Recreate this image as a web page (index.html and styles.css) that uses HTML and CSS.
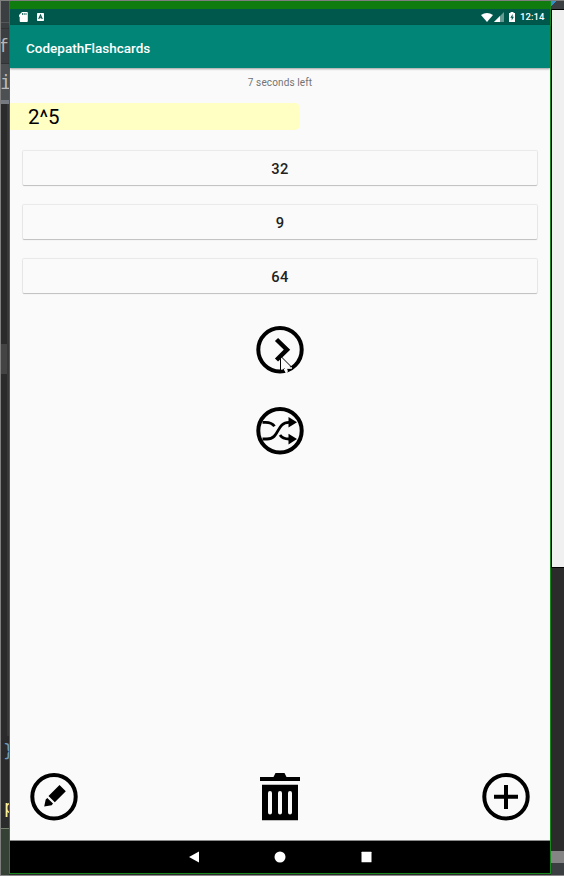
FILE: index.html
```
<!DOCTYPE html>
<html lang="en">
<head>
<meta charset="utf-8">
<title>CodepathFlashcards</title>
<link rel="stylesheet" href="styles.css">
</head>
<body>
<div class="desktop">
  <aside class="editor">
    <div class="seg toolbar"></div>
    <div class="seg toolbar-gap"></div>
    <div class="seg tab"><span class="tab-text">f'</span></div>
    <div class="seg tab-active"><span class="active-text">i</span></div>
    <div class="seg tab-line"></div>
    <div class="seg code code-top"></div>
    <div class="seg code-mark"></div>
    <div class="seg code code-mid"></div>
    <div class="seg code code-brace"><span>}</span></div>
    <div class="seg code code-word"><span>p</span></div>
    <div class="seg editor-foot"></div>
  </aside>
  <main class="device">
    <div class="frame-top"></div>
    <div class="status">
      <svg class="sd" width="9" height="10" viewBox="0 0 9 10"><path fill="#fff" d="M3 0h5q.8 0 .8.8V9q0 1-.8 1H1.500Q.7 10 .7 9V5L0 4.500V3z"/><path stroke="#00574b" stroke-width=".8" d="M3.500 1v2M5.200 1v2M7 1v2"/></svg>
      <svg class="abox" width="7" height="8" viewBox="0 0 7 8"><rect width="7" height="8" rx=".7" fill="#fff"/><path d="M1.700 6 3.500 2 5.300 6M2.500 4.800h2" fill="none" stroke="#00574b" stroke-width="1.100"/></svg>
      <span class="grow"></span>
      <svg class="wifi" width="12" height="9" viewBox="0 0 12 9"><path fill="#fff" d="M0 2Q6-2 12 2L6 9z"/></svg>
      <svg class="signal" width="10" height="10" viewBox="0 0 10 10"><path fill="#fff" fill-opacity=".4" d="M10 0v10H0z"/><path fill="#fff" d="M6 4v6H0z"/></svg>
      <svg class="battery" width="6" height="10" viewBox="0 0 6 10"><path fill="#fff" d="M1.500 0h3v1H6v9H0V1h1.500z"/><path fill="#00574b" d="M3.700 2 1.300 5.800h1.400V8.500L4.900 4.700H3.500z"/></svg>
      <span class="clock">12:14</span>
    </div>
    <header class="appbar">CodepathFlashcards</header>
    <section class="content">
      <p class="timer">7 seconds left</p>
      <div class="question">2^5</div>
      <div class="answers">
        <button>32</button>
        <button>9</button>
        <button>64</button>
      </div>
      <div class="controls">
        <svg width="48" height="48" viewBox="0 0 48 48"><circle cx="24" cy="23.700" r="21.700" fill="none" stroke="#000" stroke-width="4"/><path d="M20.500 13.500 31 23.700 20.500 34" fill="none" stroke="#000" stroke-width="4.500"/><path d="M25 31.500v12h3l2 3 2-1-1-3h4z" fill="#fafafa"/><path d="M25 30.500 35.500 41M24.500 31v15l4-3.500" fill="none" stroke="#000" stroke-width="1"/><path d="M28.500 43l2 4M30.500 42h5.500" fill="none" stroke="#fafafa" stroke-width="1.500"/></svg>
        <svg width="48" height="48" viewBox="0 0 48 48"><circle cx="24" cy="23.700" r="21.700" fill="none" stroke="#000" stroke-width="4"/><path d="M6.500 15.300h3c4 0 7 1 9 4M6.500 32h4.500c13 0 9-16.700 22-16.700M24 28c2 3 5 4 9 4" fill="none" stroke="#000" stroke-width="2.800"/><path d="M32.500 10 41 15.300 32.500 20.500zM32.500 26.800 41 32 32.500 37.500z"/></svg>
      </div>
      <div class="actions">
        <svg width="48" height="48" viewBox="0 0 48 48"><circle cx="24" cy="23.700" r="21.700" fill="none" stroke="#000" stroke-width="4"/><path d="M29.500 12 35.800 18.300 24.800 29.200 18.500 23zM17.300 25 23 30.500 21.700 32.200 14.200 33.400 15.700 26.500z"/></svg>
        <svg width="40" height="48" viewBox="0 0 40 48"><path fill-rule="evenodd" d="M0 4h13.500L15.500 0h9L26.500 4H40v4H0zM2 11.800h36v35.400H2zM10 18a2 2 0 0 0-2 2v19.500a2 2 0 0 0 4 0V20a2 2 0 0 0-2-2zM20 18a2 2 0 0 0-2 2v19.500a2 2 0 0 0 4 0V20a2 2 0 0 0-2-2zM30 18a2 2 0 0 0-2 2v19.500a2 2 0 0 0 4 0V20a2 2 0 0 0-2-2z"/></svg>
        <svg width="48" height="48" viewBox="0 0 48 48"><circle cx="24" cy="23.700" r="21.700" fill="none" stroke="#000" stroke-width="4"/><path d="M24 12v24M12 23.800h24" stroke="#000" stroke-width="4"/></svg>
      </div>
    </section>
    <nav class="nav">
      <svg width="10" height="12" viewBox="0 0 10 12"><path fill="#fff" d="M10 .5v11L0 6z"/></svg>
      <svg width="12" height="12" viewBox="0 0 12 12"><circle cx="6" cy="6" r="5.500" fill="#fff"/></svg>
      <svg width="11" height="12" viewBox="0 0 11 12"><rect x=".5" y=".8" width="10" height="10.400" rx=".5" fill="#fff"/></svg>
    </nav>
  </main>
  <aside class="side">
    <div class="side-top"></div>
    <div class="side-page"></div>
    <div class="side-dark"></div>
    <div class="side-scroll"></div>
    <div class="side-foot"></div>
  </aside>
</div>
</body>
</html>
```
FILE: styles.css
```
* { box-sizing: border-box; }
body { margin: 0; font-family: Roboto, sans-serif; }
svg { display: block; flex: none; }
.desktop {
  display: flex;
  width: 564px;
  height: 876px;
  overflow: hidden;
  background: #2b2b2b;
  border-top: 1px solid #7f7f7f;
  border-bottom: 1px solid #8a8a8a;
}
.editor {
  width: 9px;
  flex: none;
  overflow: hidden;
  border-left: 1px solid #7f7f7f;
  font-family: "DejaVu Sans Mono", monospace;
}
.seg { overflow: hidden; white-space: nowrap; }
.toolbar { height: 22px; background: #3c3f41; border-bottom: 1px solid #555759; }
.toolbar-gap { height: 5px; background: #3c3f41; }
.tab { height: 36px; background: #3c3f41; border-top: 1px solid #303234; border-bottom: 1px solid #303234; color: #b5b5b5; font-size: 18px; line-height: 33px; }
.tab-text { margin-left: -3px; letter-spacing: -3px; }
.tab-active { height: 36px; background: #4c5052; color: #bbb; font-size: 19px; line-height: 37px; }
.active-text { margin-left: -1px; }
.tab-line { height: 4px; background: #747a80; }
.code { background: #2b2b2b; border-right: 2px solid #37383a; }
.code-top { height: 240px; }
.code-mark { height: 30px; background: #444; border-right: 2px solid #37383a; }
.code-mid { height: 362px; }
.code-brace { height: 54px; color: #6e9dbd; font-size: 18px; line-height: 29px; border: 0; }
.code-brace span { margin-left: 2px; }
.code-word { height: 38px; color: #ffef9a; font-size: 18px; line-height: 34px; border: 0; }
.code-word span { margin-left: 3px; }
.editor-foot { height: 47px; background: #344134; border-top: 1px solid #72806c; }

.device {
  display: flex;
  flex-direction: column;
  width: 542px;
  height: 873px;
  flex: none;
  background: #fafafa;
  border: 1px solid #16881d;
  border-top: 0;
}
.frame-top { height: 8px; flex: none; background: #107c10; }
.status {
  display: flex;
  align-items: center;
  height: 16px;
  flex: none;
  padding: 0 5px 0 9px;
  background: #00574b;
  color: #fff;
}
.abox { margin-left: 9px; }
.grow { flex: 1; }
.signal { margin-left: 1px; }
.battery { margin: 0 5px 0 5px; }
.clock { width: 25px; font-size: 9.600px; font-weight: 500; line-height: 16px; }
.appbar {
  height: 43px;
  flex: none;
  padding-left: 16px;
  background: #008577;
  box-shadow: 0 1px 2px rgba(0, 0, 0, .38);
  color: #fff;
  font-size: 13.500px;
  font-weight: 500;
  line-height: 46px;
}
.content { display: flex; flex-direction: column; flex: 1; }
.timer { margin: 7px 0 0; height: 16px; line-height: 16px; color: #737373; font-size: 10px; letter-spacing: .12px; text-align: center; }
.question {
  width: 290px;
  height: 27px;
  margin-top: 12px;
  padding-left: 18px;
  border-radius: 0 5px 5px 0;
  background: #ffffc4;
  color: #000;
  font-size: 20.500px;
  line-height: 29px;
}
.answers { display: flex; flex-direction: column; gap: 20px; margin: 21px 13px 0; }
.answers button {
  height: 34px;
  margin: 0;
  padding: 2px 0 0;
  border: 0;
  border-radius: 1px;
  background: #fafafa;
  box-shadow: 0 0 1px 1px rgba(0, 0, 0, .07), 0 1px 1px rgba(0, 0, 0, .18);
  color: #212121;
  font: 500 14.700px Roboto, sans-serif;
  letter-spacing: .4px;
}
.controls { display: flex; flex-direction: column; align-items: center; gap: 33px; margin-top: 33px; }
.actions { display: flex; align-items: center; justify-content: space-between; margin: auto 20px 19px; }
.nav {
  display: flex;
  align-items: center;
  justify-content: space-between;
  height: 33px;
  flex: none;
  padding: 0 178px 0 179px;
  background: #000;
  border-top: 1px solid #8b8b8b;
}

.side { width: 13px; flex: none; display: flex; flex-direction: column; }
.side-top { height: 8px; background: linear-gradient(135deg, #3592c4 0 4px, #3c3f41 4px); }
.side-page { height: 559px; background: #f0f0f0; border: solid #000; border-width: 1px 0 1px 1px; }
.side-dark { height: 283px; background: #2b2b2b; }
.side-scroll { height: 12px; background: #848484; }
.side-foot { flex: 1; background: #3b3e40; }
```
